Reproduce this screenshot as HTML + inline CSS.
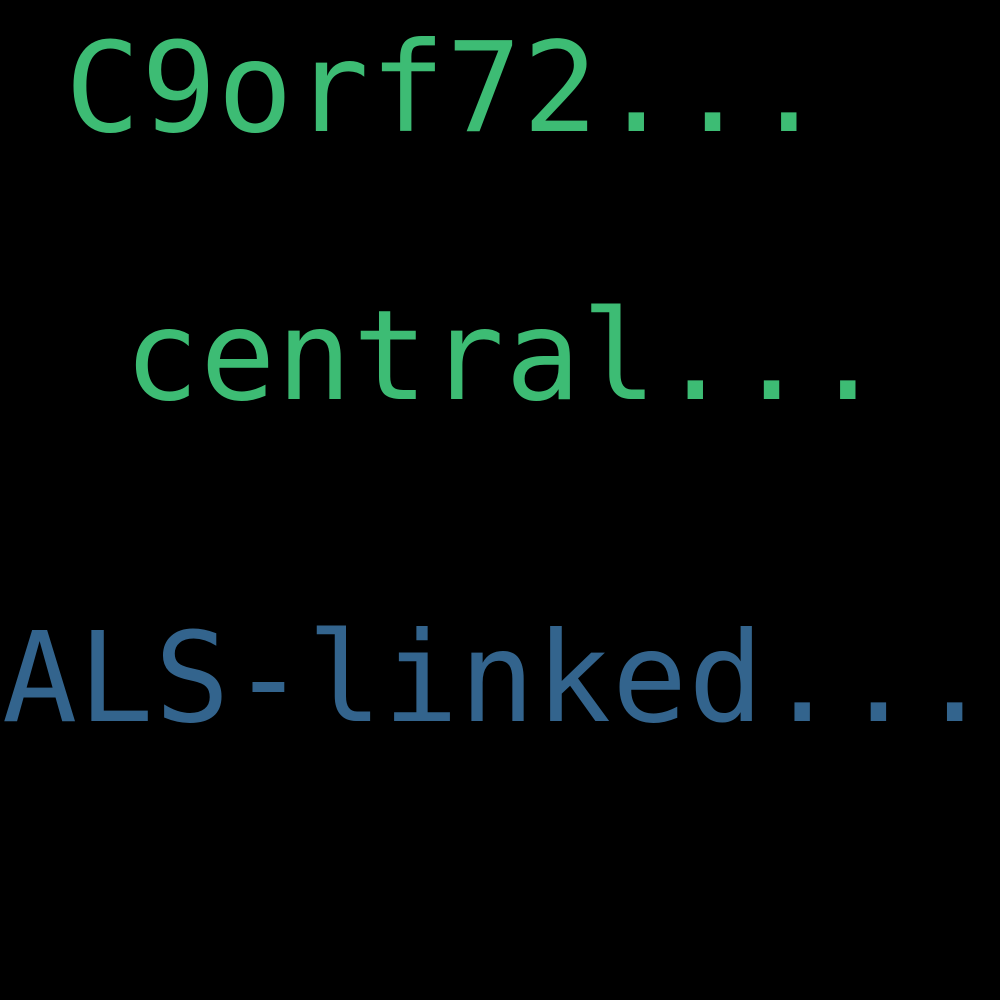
<!DOCTYPE html>
<html><head><style>
html,body{margin:0;padding:0;background:#000;width:1000px;height:1000px;overflow:hidden}
svg{display:block}
text{font-family:"DejaVu Sans Mono","Liberation Mono",monospace;font-size:125px;letter-spacing:1px}
</style></head><body>
<svg width="1000" height="1000" xmlns="http://www.w3.org/2000/svg">
<rect width="1000" height="1000" fill="#000"/>
<text x="65" y="131" fill="#3dbc74">C9orf72...</text>
<text x="124" y="399" fill="#3dbc74">central...</text>
<text x="2" y="721" fill="#33648d">ALS-linked...</text>
</svg>
</body></html>
